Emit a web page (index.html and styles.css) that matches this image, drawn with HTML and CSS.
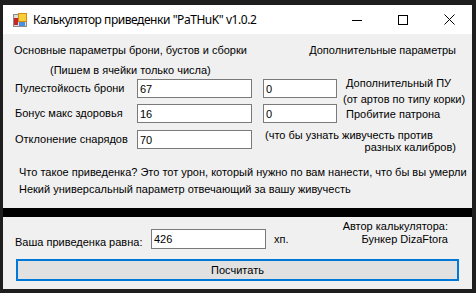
FILE: index.html
```html
<!DOCTYPE html>
<html lang="ru">
<head>
  <meta charset="UTF-8" />
  <title>Калькулятор приведенки</title>
  <link rel="stylesheet" href="styles.css">
</head>
<body>
  <div class="window">
    <!-- Title bar -->
    <div class="titlebar">
      <svg class="app-icon" width="16" height="16" viewBox="0 0 16 16">
        <rect x="1.5" y="2.5" width="13" height="12" fill="#dcdcdc" stroke="#8c8c8c" />
        <rect x="2" y="6" width="4" height="7" fill="#c62828" />
        <rect x="6.5" y="1.5" width="8" height="8" fill="#f6cf3a" stroke="#d18a12" />
        <rect x="7" y="10" width="6" height="4" fill="#4a8ee0" />
      </svg>
      <span class="title">Калькулятор приведенки "PaTHuK" v1.0.2</span>
      <div class="caption-btns">
        <span class="cap-btn">
          <svg width="10" height="10" viewBox="0 0 10 10"><line x1="0" y1="5.5" x2="10" y2="5.5" stroke="#000" /></svg>
        </span>
        <span class="cap-btn">
          <svg width="10" height="10" viewBox="0 0 10 10"><rect x="0.5" y="0.5" width="9" height="9" fill="none" stroke="#000" /></svg>
        </span>
        <span class="cap-btn">
          <svg width="11" height="11" viewBox="0 0 11 11"><path d="M0.5 0.5 L10.5 10.5 M10.5 0.5 L0.5 10.5" stroke="#000" /></svg>
        </span>
      </div>
    </div>

    <div class="client">
      <!-- Inputs -->
      <div class="top-panel">
        <div class="header-row">
          <span>Основные параметры брони, бустов и сборки</span>
          <span class="extra-head">Дополнительные параметры</span>
        </div>
        <div class="hint">(Пишем в ячейки только числа)</div>

        <div class="form-rows">
          <div class="frow row-1">
            <label class="lbl">Пулестойкость брони</label>
            <input class="field main-field" type="text" value="67" />
            <input class="field extra-field" type="text" value="0" />
            <div class="note-extra">
              <div class="n1">Дополнительный ПУ</div>
              <div class="n2">(от артов по типу корки)</div>
              <div class="n3">Пробитие патрона</div>
            </div>
          </div>
          <div class="frow row-2">
            <label class="lbl">Бонус макс здоровья</label>
            <input class="field main-field" type="text" value="16" />
            <input class="field extra-field" type="text" value="0" />
          </div>
          <div class="frow row-3">
            <label class="lbl">Отклонение снарядов</label>
            <input class="field main-field" type="text" value="70" />
            <div class="note-calibre">
              <div>(что бы узнать живучесть против</div>
              <div class="right">разных калибров)</div>
            </div>
          </div>
        </div>

        <p class="explain">
          Что такое приведенка? Это тот урон, который нужно по вам нанести, что бы вы умерли<br>
          Некий универсальный параметр отвечающий за вашу живучесть
        </p>
      </div>

      <div class="divider"></div>

      <!-- Result -->
      <div class="bottom-panel">
        <div class="result-row">
          <span class="result-lbl">Ваша приведенка равна:</span>
          <input class="field result-field" type="text" value="426" />
          <span class="unit">хп.</span>
          <div class="author">
            <div>Автор калькулятора:</div>
            <div>Бункер DizaFtora</div>
          </div>
        </div>
        <button class="calc-btn">Посчитать</button>
      </div>
    </div>
  </div>
</body>
</html>
```

FILE: styles.css
```css
html, body {
  margin: 0;
  padding: 0;
}

body {
  width: 476px;
  height: 293px;
  overflow: hidden;
  background-color: #1e1e1e;
  font-family: "Liberation Sans", Arial, sans-serif;
  font-size: 11px;
  color: #000;
}

.window {
  margin: 5px 0 0 3px;
  width: 469px;
  height: 284px;
  background-color: #f0f0f0;
  display: flex;
  flex-direction: column;
}

/* title bar */
.titlebar {
  height: 29px;
  background-color: #fff;
  display: flex;
  align-items: center;
  flex-shrink: 0;
}

.app-icon {
  margin-left: 9px;
  flex-shrink: 0;
}

.title {
  margin-left: 5px;
  font-family: "Noto Sans", sans-serif;
  font-size: 12px;
  letter-spacing: -0.45px;
  white-space: nowrap;
}

.caption-btns {
  margin-left: auto;
  display: flex;
  height: 100%;
}

.cap-btn {
  width: 46px;
  height: 100%;
  display: flex;
  align-items: center;
  justify-content: center;
}

/* client area */
.client {
  flex: 1;
  display: flex;
  flex-direction: column;
}

.top-panel {
  height: 174px;
  padding-top: 10px;
  box-sizing: border-box;
}

.header-row {
  display: flex;
  padding: 0 16px 0 11px;
  line-height: 13px;
  white-space: nowrap;
}

.extra-head {
  margin-left: auto;
}

.hint {
  margin: 7px 0 0 47px;
  line-height: 13px;
}

.form-rows {
  margin-top: 2px;
  padding: 0 16px 0 11px;
}

.frow {
  display: flex;
  align-items: flex-start;
}

.row-1 { height: 25px; }
.row-2 { height: 26px; }
.row-3 { height: 19px; }

.lbl {
  width: 123px;
  flex-shrink: 0;
  box-sizing: border-box;
  padding-left: 1px;
  line-height: 19px;
  white-space: nowrap;
}

.field {
  height: 19px;
  box-sizing: border-box;
  border: 1px solid #7a7a7a;
  background-color: #fff;
  padding: 0 0 0 2px;
  margin: 0;
  font-family: "Liberation Sans", Arial, sans-serif;
  font-size: 11px;
  color: #000;
  outline: none;
  flex-shrink: 0;
}

.main-field {
  width: 115px;
}

.extra-field {
  width: 74px;
  margin-left: 11px;
}

.note-extra {
  margin: -3px 0 0 9px;
  white-space: nowrap;
  line-height: 14px;
}

.note-extra .n2 {
  margin: 2px 0 0 -3px;
}

.note-extra .n3 {
  margin-top: 1px;
}

.note-calibre {
  flex: 1;
  min-width: 0;
  margin: -1px 0 0 13px;
  line-height: 12px;
  white-space: nowrap;
}

.note-calibre .right {
  text-align: right;
}

.explain {
  margin: 15px 0 0 16px;
  line-height: 17px;
  white-space: nowrap;
}

.divider {
  height: 9px;
  background-color: #000;
  flex-shrink: 0;
}

.bottom-panel {
  flex: 1;
  padding-top: 3px;
}

.result-row {
  display: flex;
  align-items: flex-start;
  padding: 0 24px 0 12px;
}

.result-lbl {
  width: 136px;
  margin-top: 12px;
  line-height: 20px;
  white-space: nowrap;
}

.result-field {
  width: 115px;
  height: 20px;
  margin-top: 9px;
}

.unit {
  margin: 9px 0 0 8px;
  line-height: 20px;
}

.author {
  margin-left: auto;
  text-align: right;
  line-height: 13px;
  white-space: nowrap;
}

.calc-btn {
  display: block;
  width: 443px;
  height: 22px;
  margin: 7px 0 0 13px;
  padding: 0;
  border: 2px solid #0078d7;
  background-color: #e1e1e1;
  font-family: "Liberation Sans", Arial, sans-serif;
  font-size: 11px;
  color: #000;
}
```
